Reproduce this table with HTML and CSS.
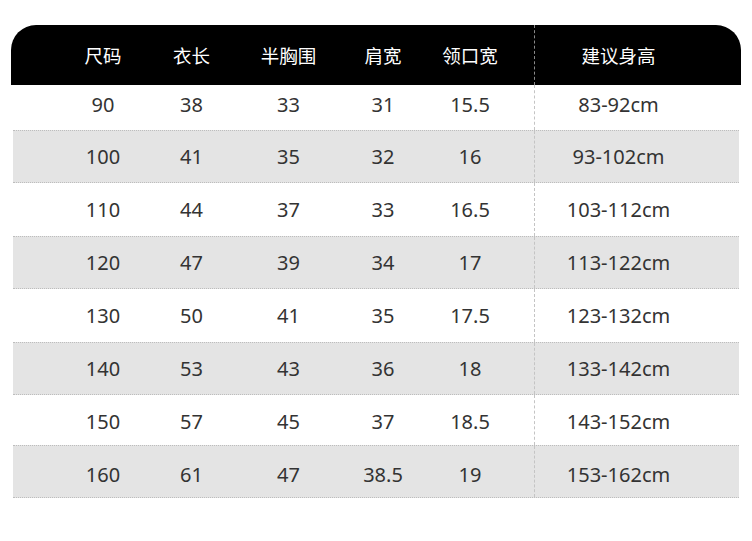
FILE: index.html
```html
<!DOCTYPE html>
<html lang="zh">
<head>
<meta charset="utf-8">
<link rel="stylesheet" href="styles.css">
</head>
<body>
<div class="sheet">
  <div class="row head">
    <div class="c">尺码</div><div class="c">衣长</div><div class="c">半胸围</div><div class="c">肩宽</div><div class="c">领口宽</div><div class="c c6">建议身高</div>
  </div>
  <div class="row first">
    <div class="c">90</div><div class="c">38</div><div class="c">33</div><div class="c">31</div><div class="c">15.5</div><div class="c c6">83-92cm</div>
  </div>
  <div class="row gray">
    <div class="c">100</div><div class="c">41</div><div class="c">35</div><div class="c">32</div><div class="c">16</div><div class="c c6">93-102cm</div>
  </div>
  <div class="row">
    <div class="c">110</div><div class="c">44</div><div class="c">37</div><div class="c">33</div><div class="c">16.5</div><div class="c c6">103-112cm</div>
  </div>
  <div class="row gray">
    <div class="c">120</div><div class="c">47</div><div class="c">39</div><div class="c">34</div><div class="c">17</div><div class="c c6">113-122cm</div>
  </div>
  <div class="row">
    <div class="c">130</div><div class="c">50</div><div class="c">41</div><div class="c">35</div><div class="c">17.5</div><div class="c c6">123-132cm</div>
  </div>
  <div class="row gray">
    <div class="c">140</div><div class="c">53</div><div class="c">43</div><div class="c">36</div><div class="c">18</div><div class="c c6">133-142cm</div>
  </div>
  <div class="row short">
    <div class="c">150</div><div class="c">57</div><div class="c">45</div><div class="c">37</div><div class="c">18.5</div><div class="c c6">143-152cm</div>
  </div>
  <div class="row gray last">
    <div class="c">160</div><div class="c">61</div><div class="c">47</div><div class="c">38.5</div><div class="c">19</div><div class="c c6">153-162cm</div>
  </div>
</div>
</body>
</html>
```
FILE: styles.css
```css
html, body {
  margin: 0;
  padding: 0;
  background: #ffffff;
}
body {
  font-family: "Noto Sans", "Noto Sans CJK SC", sans-serif;
  color: #333333;
}
.sheet {
  padding: 25px 0 0 11px;
  width: 730px;
}
.row {
  display: grid;
  grid-template-columns: 90px 87px 107px 82px 92px 18px 168px 1fr;
  padding-left: 45px;
  height: 53px;
  align-items: stretch;
  font-size: 20px;
  margin: 0 2px;
  box-sizing: border-box;
}
.c {
  display: flex;
  align-items: center;
  justify-content: center;
  text-align: center;
  white-space: nowrap;
}
.c6 {
  grid-column: 7;
  border-left: 1px dashed #c4c4c4;
}
.head {
  height: 60px;
  margin: 0;
  padding-left: 47px;
  background: #000;
  color: #fff;
  border-radius: 25px 25px 0 0;
  font-family: "Noto Sans CJK SC", sans-serif;
  font-size: 18.5px;
}
.head .c6 {
  border-left-color: #8a8a8a;
}
.first {
  height: 45px;
}
.first .c {
  padding-bottom: 6px;
}
.short {
  height: 50px;
}
.short .c {
  padding-top: 3px;
}
.last .c {
  padding-top: 6px;
}
.gray {
  background: #e4e4e4;
  border-top: 1px dotted #bdbdbd;
  border-bottom: 1px dotted #bdbdbd;
}
```
